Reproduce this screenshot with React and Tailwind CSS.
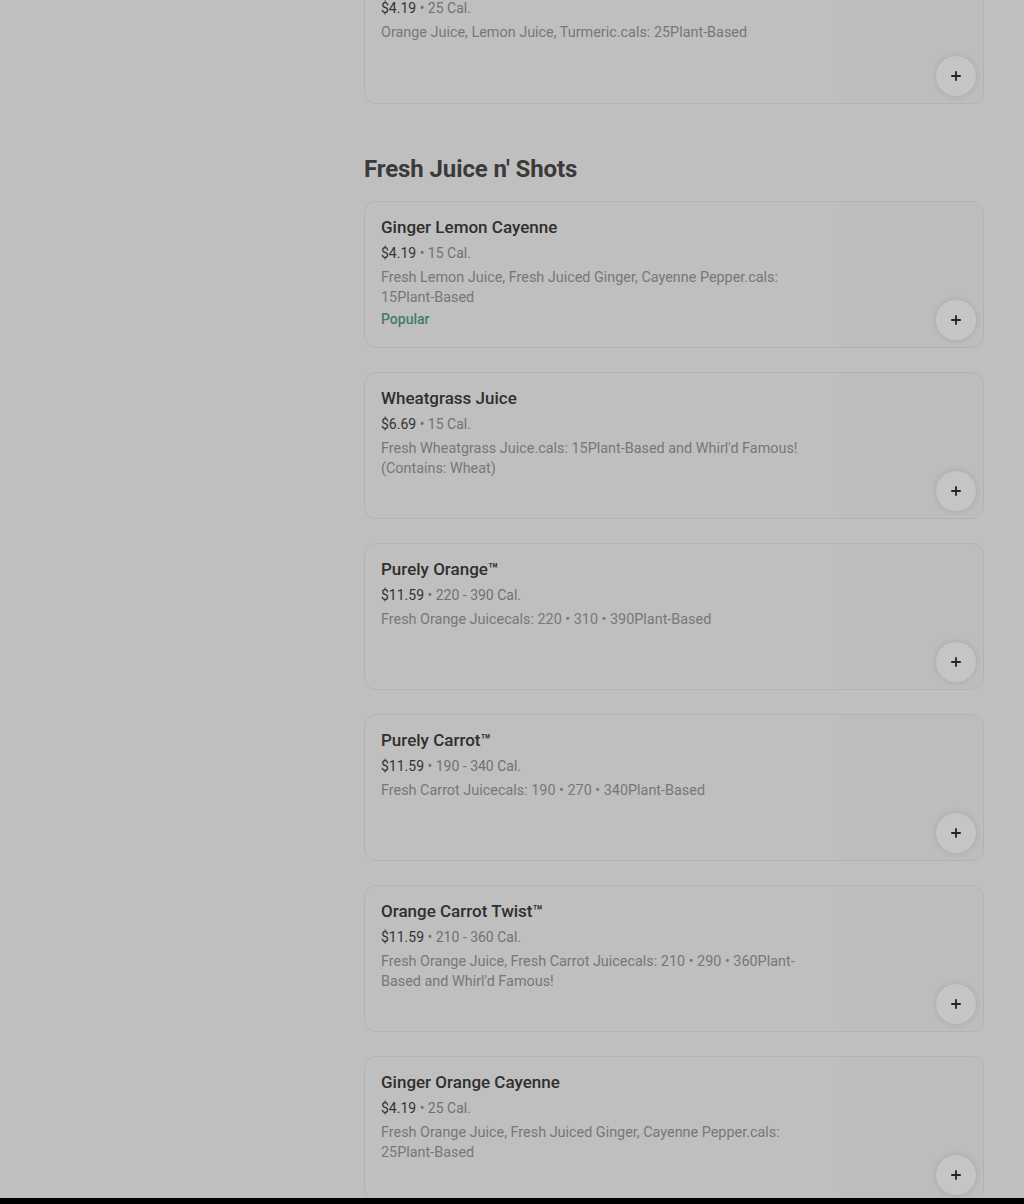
import { Plus } from "lucide-react";

const topItem = { price: "$4.19", cal: "25 Cal.", desc: "Orange Juice, Lemon Juice, Turmeric.cals: 25Plant-Based" };

const juices = [
  { name: "Ginger Lemon Cayenne", price: "$4.19", cal: "15 Cal.", desc: "Fresh Lemon Juice, Fresh Juiced Ginger, Cayenne Pepper.cals: 15Plant-Based", popular: true },
  { name: "Wheatgrass Juice", price: "$6.69", cal: "15 Cal.", desc: "Fresh Wheatgrass Juice.cals: 15Plant-Based and Whirl'd Famous! (Contains: Wheat)" },
  { name: "Purely Orange™", price: "$11.59", cal: "220 - 390 Cal.", desc: "Fresh Orange Juicecals: 220 • 310 • 390Plant-Based" },
  { name: "Purely Carrot™", price: "$11.59", cal: "190 - 340 Cal.", desc: "Fresh Carrot Juicecals: 190 • 270 • 340Plant-Based" },
  { name: "Orange Carrot Twist™", price: "$11.59", cal: "210 - 360 Cal.", desc: "Fresh Orange Juice, Fresh Carrot Juicecals: 210 • 290 • 360Plant-Based and Whirl'd Famous!" },
  { name: "Ginger Orange Cayenne", price: "$4.19", cal: "25 Cal.", desc: "Fresh Orange Juice, Fresh Juiced Ginger, Cayenne Pepper.cals: 25Plant-Based" },
];

const ItemCard = ({ item, className = "h-[147px]" }) => (
  <div className={`relative flex overflow-hidden rounded-xl border border-[#b3b3b3] bg-[#bfbfbf] ${className}`}>
    <div className="w-[456px] shrink-0 pl-4 pt-[13px]">
      {item.name && (
        <div className="text-[17px] font-medium leading-6 text-[#2f2f2f]">{item.name}</div>
      )}
      <div className="mt-1 text-[14px] leading-5 text-[#717171]">
        <span className="text-[#333]">{item.price}</span> • {item.cal}
      </div>
      <div className="mt-[5px] w-[440px] text-[14.4px] leading-5 text-[#777]">{item.desc}</div>
      {item.popular && (
        <div className="mt-[1px] text-[14px] font-medium leading-5 text-[#437d5f]">Popular</div>
      )}
    </div>
    <div className="flex-1" />
    <div className="w-[144px] shrink-0 bg-[#bdbdbd]" />
    <button
      type="button"
      className="absolute bottom-[7px] right-[7px] flex h-10 w-10 items-center justify-center rounded-full bg-[#c5c5c5] shadow-[0_0_6px_rgba(0,0,0,0.12)]"
    >
      <Plus className="h-[14px] w-[14px] text-[#262626]" strokeWidth={3.2} />
    </button>
  </div>
);

export default function App() {
  return (
    <div className="flex h-[1204px] flex-col overflow-hidden bg-[#bfbfbf] font-['Roboto',sans-serif]">
      <div className="flex-1 overflow-hidden">
        <div className="ml-[364px] w-[620px]">
          <div className="mt-[-20px]">
            <ItemCard item={topItem} className="h-[124px]" />
          </div>
          <h2 className="mt-[49px] text-[24px] font-bold leading-8 tracking-[-0.1px] text-[#3a3a3a]">
            Fresh Juice n' Shots
          </h2>
          <div className="mt-4 flex flex-col gap-6">
            {juices.map((j) => (
              <ItemCard key={j.name} item={j} />
            ))}
          </div>
        </div>
      </div>
      <div className="h-[6px] shrink-0 bg-black" />
    </div>
  );
}
